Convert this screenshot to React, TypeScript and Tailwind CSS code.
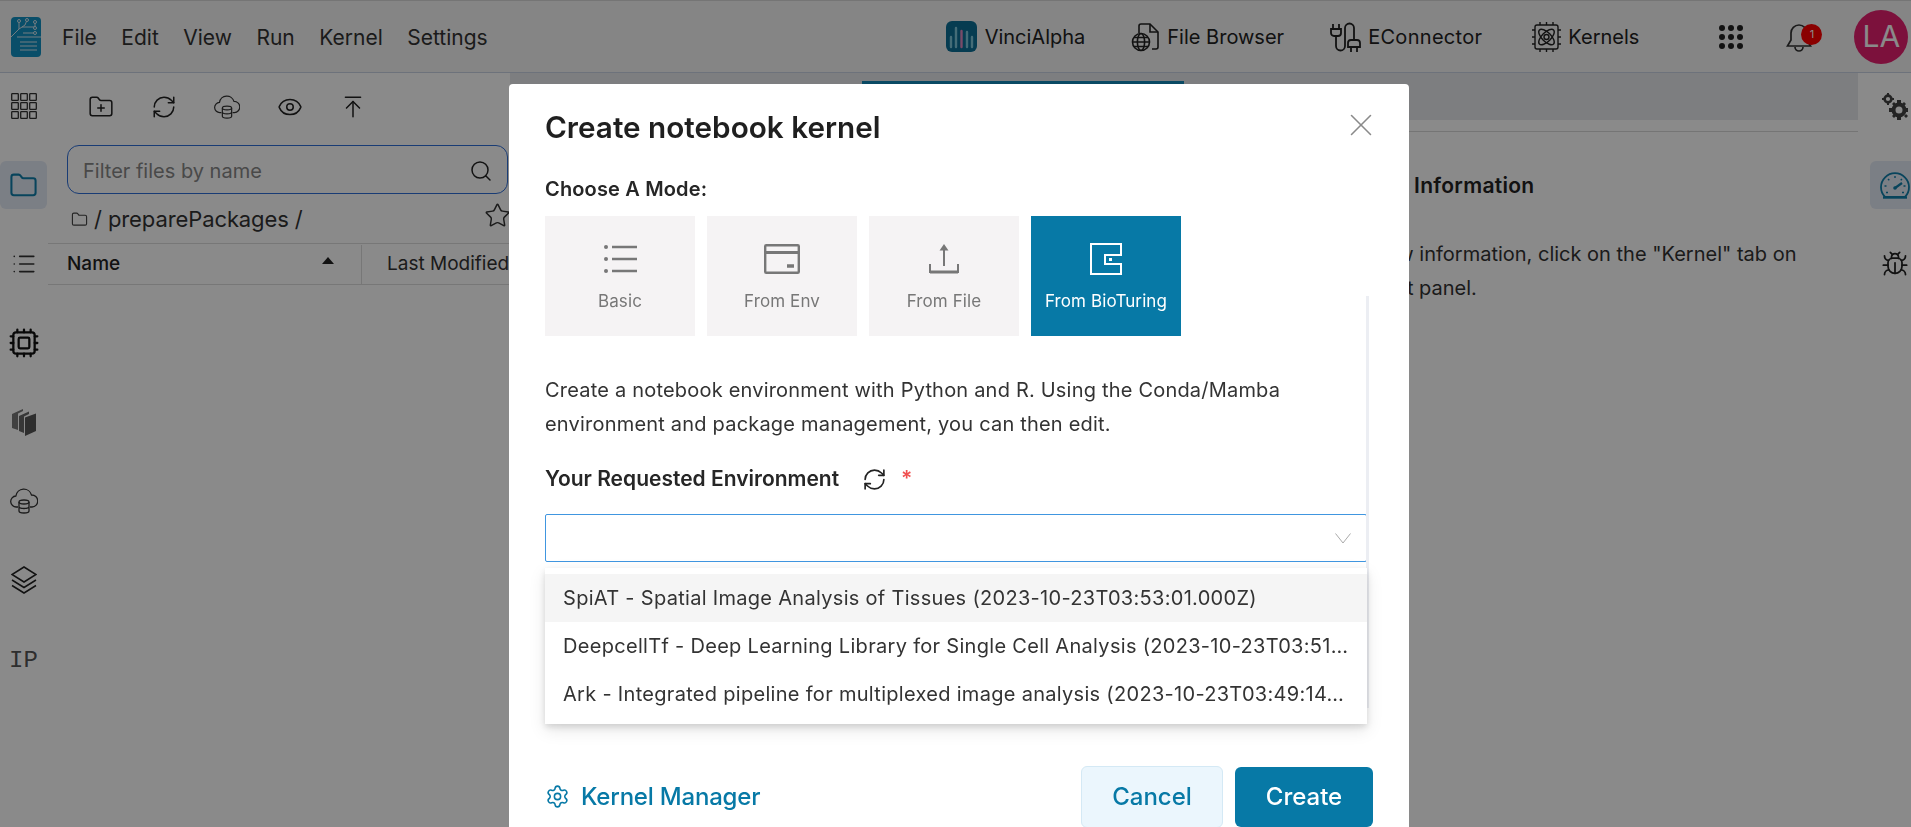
import React from 'react';
import {
  ArrowUpToLine,
  Bug,
  Cpu,
  Eye,
  Folder,
  FolderPlus,
  List,
  RefreshCw,
  Search,
  Settings,
  Star,
  X,
} from 'lucide-react';

const font = "font-['Inter','Liberation_Sans',sans-serif]";

function Logo() {
  return (
    <svg width="30" height="40" viewBox="0 0 30 40" className="shrink-0">
      <rect width="30" height="40" rx="4" fill="#1290c2" />
      <g fill="none" stroke="#d5e6ee" strokeWidth="1">
        <path d="M0 20 L8 12 V4 M8 12 L14 8 L16 3 M11 10 H24 V5 M12 16 H24 M6 20 H30" />
        <path d="M9 25 H26 M9 29 H26 M9 33 H26" />
      </g>
      <g fill="#1290c2" stroke="#d5e6ee" strokeWidth="1">
        <circle cx="8" cy="4" r="1.5" />
        <circle cx="16" cy="3" r="1.5" />
        <circle cx="24" cy="5" r="1.5" />
        <circle cx="24" cy="11" r="1.5" />
        <circle cx="24" cy="16" r="1.5" />
      </g>
    </svg>
  );
}

function VinciIcon() {
  return (
    <svg width="31" height="31" viewBox="0 0 31 31" className="mr-[2px] shrink-0">
      <rect width="31" height="31" rx="6" fill="#0c6f96" />
      <g strokeWidth="2.4" strokeLinecap="round">
        <path d="M5 26 V16" stroke="#7fc8dc" />
        <path d="M10 26 V7" stroke="#7fc8dc" />
        <path d="M15.5 26 V10" stroke="#e08ac0" />
        <path d="M21 26 V11" stroke="#7fc8dc" />
        <path d="M26 26 V16" stroke="#7fc8dc" />
      </g>
    </svg>
  );
}

function FileGlobeIcon() {
  return (
    <svg width="30" height="30" viewBox="0 0 30 30" fill="none" stroke="#222" strokeWidth="1.6" className="shrink-0">
      <path d="M8 11 V4 a2 2 0 0 1 2-2 H19 L27 10 V25 a2 2 0 0 1-2 2 H21" />
      <path d="M19 2 V10 H27" />
      <circle cx="10" cy="20" r="8.5" />
      <ellipse cx="10" cy="20" rx="3.6" ry="8.5" />
      <path d="M1.5 20 H18.5 M3 15.5 H17 M3 24.5 H17" />
    </svg>
  );
}

function PlugIcon() {
  return (
    <svg width="32" height="32" viewBox="0 0 32 32" fill="none" stroke="#222" strokeWidth="1.8" className="shrink-0">
      <path d="M3 3 V8 M9 3 V8 M1 8 H11 V12 a3 3 0 0 1-3 3 H4 a3 3 0 0 1-3-3 Z" />
      <path d="M6 15 V25 a4.5 4.5 0 0 0 9 0 V7 a4.5 4.5 0 0 1 9 0 V19" />
      <path d="M21 19 H27 a3 3 0 0 1 3 3 V26 H18 V22 a3 3 0 0 1 3-3 Z M21 26 V31 M27 26 V31" />
    </svg>
  );
}

function KernelChipIcon() {
  return (
    <svg width="31" height="32" viewBox="0 0 31 32" fill="none" stroke="#222" strokeWidth="1.4" className="ml-[3px] shrink-0">
      <rect x="4" y="4" width="23" height="24" rx="2" />
      <path d="M9 1 V4 M15.5 1 V4 M22 1 V4 M9 28 V31 M15.5 28 V31 M22 28 V31 M1 9 H4 M1 16 H4 M1 23 H4 M27 9 H30 M27 16 H30 M27 23 H30" />
      <ellipse cx="15.5" cy="16" rx="10" ry="4.5" transform="rotate(45 15.5 16)" />
      <ellipse cx="15.5" cy="16" rx="10" ry="4.5" transform="rotate(-45 15.5 16)" />
      <circle cx="15.5" cy="16" r="2.5" />
    </svg>
  );
}

function DotsIcon() {
  return (
    <div className="grid grid-cols-3 gap-x-[3px] gap-y-[3px]">
      {[0, 1, 2, 3, 4, 5, 6, 7, 8].map((i) => (
        <span key={i} className="size-[6px] rounded-full bg-[#222]" />
      ))}
    </div>
  );
}

function GridIcon() {
  return (
    <svg width="26" height="26" viewBox="0 0 26 26" fill="none" stroke="#333" strokeWidth="1.3">
      {[0, 9, 18].map((y) =>
        [0, 9, 18].map((x) => <rect key={`${x}-${y}`} x={x + 0.7} y={y + 0.7} width="6.6" height="6.6" rx="0.6" />),
      )}
    </svg>
  );
}

function CloudDbIcon({ size = 28 }: { size?: number }) {
  return (
    <svg width={size} height={size} viewBox="0 0 28 28" fill="none" stroke="#333" strokeWidth="1.3">
      <path d="M8 20 H6.5 a5.5 5.5 0 0 1-.6-11 a8 8 0 0 1 15.6-1 a6 6 0 0 1 .5 12 H20" />
      <ellipse cx="14" cy="15" rx="5" ry="2" />
      <path d="M9 15 V24 c0 1.1 2.2 2 5 2 s5-.9 5-2 V15 M9 19.5 c0 1.1 2.2 2 5 2 s5-.9 5-2" />
    </svg>
  );
}

function PacksIcon() {
  return (
    <svg width="26" height="28" viewBox="0 0 26 28" fill="#666">
      <path d="M1 6 L12 1 V3 L7 5.5 V22 L1 20 Z" fill="#777" />
      <path d="M8 8 L18 3.5 V6 L13 8.5 V25 L8 23 Z" fill="#666" />
      <path d="M14 9.5 L25 5.5 V23 L14 28 Z" fill="#555" />
    </svg>
  );
}

function StackIcon() {
  return (
    <svg width="26" height="28" viewBox="0 0 26 28" fill="none" stroke="#222" strokeWidth="1.5">
      <path d="M13 1 L25 8.5 L13 16 L1 8.5 Z" />
      <path d="M1 14 L13 21.5 L25 14" />
      <path d="M1 19.5 L13 27 L25 19.5" />
    </svg>
  );
}

function GearsIcon() {
  return (
    <svg width="26" height="27" viewBox="0 0 26 27" fill="#444">
      <circle cx="6" cy="6" r="3.4" fill="none" stroke="#444" strokeWidth="2.6" />
      <path d="M5 0 H7 V2 H5 Z M5 10 H7 V12 H5 Z M0 5 H2 V7 H0 Z M10 5 H12 V7 H10 Z" />
      <circle cx="17" cy="17" r="5.5" fill="none" stroke="#444" strokeWidth="4" />
      <path d="M15 7 H19 V10 H15 Z M15 24 H19 V27 H15 Z M7 15 H10 V19 H7 Z M24 15 H26 V19 H24 Z M10 11 L12 9 L14 11 L12 13 Z M22 23 L24 21 L26 23 L24 25 Z M20 11 L22 9 L24 11 L22 13 Z M10 23 L12 21 L14 23 L12 25 Z" />
    </svg>
  );
}

function DialIcon() {
  return (
    <svg width="30" height="27" viewBox="0 0 30 27" fill="none" stroke="#0f7faa" strokeWidth="1.8" className="ml-[3px]">
      <path d="M5 25 a14 14 0 1 1 20 0 Z" />
      <path d="M3 25.5 H27" strokeWidth="2.4" />
      <path d="M15 16 L22 11" strokeWidth="2.2" />
      <circle cx="15" cy="16" r="1.8" fill="#0f7faa" stroke="none" />
      <path d="M15 4 V6 M8 7 L9.3 8.3 M22 7 L20.7 8.3 M4.5 14 H6.5 M23.5 14 H25.5 M6 20.5 H8 M22 20.5 H24" strokeWidth="1.4" />
    </svg>
  );
}

function BulletsIcon() {
  return (
    <svg width="33" height="28" viewBox="0 0 33 28" fill="none" stroke="#777" strokeWidth="2.4">
      <path d="M8 2 H33 M8 14 H33 M8 26 H33" />
      <circle cx="2" cy="2" r="2" fill="#777" stroke="none" />
      <circle cx="2" cy="14" r="2" fill="#777" stroke="none" />
      <circle cx="2" cy="26" r="2" fill="#777" stroke="none" />
    </svg>
  );
}

function CardIcon() {
  return (
    <svg width="36" height="30" viewBox="0 0 36 30" fill="none" stroke="#777" strokeWidth="2.4">
      <rect x="1.2" y="1.2" width="33.6" height="27.6" rx="1" />
      <path d="M1 8.5 H35" strokeWidth="3" />
      <path d="M23 22 H30" strokeWidth="3.5" />
    </svg>
  );
}

function TrayUpIcon() {
  return (
    <svg width="30" height="30" viewBox="0 0 30 30" fill="none" stroke="#777" strokeWidth="2">
      <path d="M1 20 V28 H29 V20" />
      <path d="M1 28 H29" strokeWidth="3" />
      <path d="M15 22 V4" />
      <path d="M15 0 L19.5 6.5 H10.5 Z" fill="#777" stroke="none" />
    </svg>
  );
}

function WalletIcon() {
  return (
    <svg width="32" height="32" viewBox="0 0 32 32" fill="none" stroke="#fff" strokeWidth="2">
      <path d="M31 1 H1 V31 H31 V21 H15 V12 H31 Z" />
      <rect x="19" y="15" width="3" height="3" fill="#fff" stroke="none" />
    </svg>
  );
}

function MenuItem({ label }: { label: string }) {
  return <span className="text-[21px] text-[#333]">{label}</span>;
}

function TopLink({ icon, label, wide }: { icon: React.ReactNode; label: string; wide?: boolean }) {
  return (
    <div className="flex items-center gap-[6px]">
      {icon}
      <span className={`text-[20px] text-[#222] ${wide ? 'tracking-[0.3px]' : ''}`}>{label}</span>
    </div>
  );
}

function Header() {
  return (
    <header className="flex h-[73px] shrink-0 items-center border-t border-b border-t-[#d8d8d8] border-b-[#c9d2e4] bg-[#f6f6f6] pl-[11px]">
      <Logo />
      <nav className="ml-[21px] flex items-center gap-[24.5px] pt-[2px]">
        {['File', 'Edit', 'View', 'Run', 'Kernel', 'Settings'].map((m) => (
          <MenuItem key={m} label={m} />
        ))}
      </nav>
      <div className="ml-[458px] flex items-center gap-[46px]">
        <TopLink icon={<VinciIcon />} label="VinciAlpha" />
        <TopLink icon={<FileGlobeIcon />} label="File Browser" />
        <TopLink icon={<PlugIcon />} label="EConnector" wide />
        <TopLink icon={<KernelChipIcon />} label="Kernels" />
      </div>
      <div className="ml-[80px]">
        <DotsIcon />
      </div>
      <div className="relative ml-[43px] w-[36px] pt-[2px]">
        <svg width="26" height="32" viewBox="0 0 26 32" fill="none" stroke="#333" strokeWidth="1.7">
          <path d="M13 3 a8 8 0 0 0-8 8 V18 L1.5 24 H24.5 L21 18 V11 a8 8 0 0 0-8-8 Z M9 25 a4 4 0 0 0 8 0" />
        </svg>
        <span className="absolute top-[4px] left-[15px] flex size-[21px] items-center justify-center rounded-full bg-[#ff0000] text-[11px] text-[#fff]">
          1
        </span>
      </div>
      <div className="ml-[32px] flex size-[54px] items-center justify-center rounded-full bg-[#e6206f] text-[30px] text-[#fff]">
        LA
      </div>
    </header>
  );
}

function RailItem({ children, active }: { children: React.ReactNode; active?: boolean }) {
  return (
    <div className={`flex h-[48px] w-[47px] items-center justify-center rounded-[6px] ${active ? 'bg-[#e4eaf6]' : ''}`}>
      {children}
    </div>
  );
}

function LeftRail() {
  return (
    <aside className="flex w-[48px] shrink-0 flex-col gap-[31px] pt-[9px]">
      <RailItem>
        <GridIcon />
      </RailItem>
      <RailItem active>
        <Folder size={29} strokeWidth={1.7} className="text-[#0f7faa]" />
      </RailItem>
      <RailItem>
        <List size={26} strokeWidth={1.5} className="text-[#333]" />
      </RailItem>
      <RailItem>
        <Cpu size={32} strokeWidth={1.7} className="text-[#111]" />
      </RailItem>
      <RailItem>
        <PacksIcon />
      </RailItem>
      <RailItem>
        <CloudDbIcon />
      </RailItem>
      <RailItem>
        <StackIcon />
      </RailItem>
      <RailItem>
        <span className="pt-[3px] font-['Liberation_Mono',monospace] text-[24px] text-[#555]">IP</span>
      </RailItem>
    </aside>
  );
}

function FilePanel() {
  return (
    <section className="w-[462px] shrink-0 pl-[19px]">
      <div className="flex h-[66px] items-center gap-[37px] pl-[21px] pt-[2px]">
        <FolderPlus size={26} strokeWidth={1.4} className="text-[#222]" />
        <RefreshCw size={26} strokeWidth={1.4} className="text-[#222]" />
        <CloudDbIcon size={26} />
        <Eye size={26} strokeWidth={1.4} className="text-[#222]" />
        <ArrowUpToLine size={26} strokeWidth={1.4} className="text-[#222]" />
      </div>
      <div className="mt-[6px] flex h-[49px] w-[441px] items-center justify-between rounded-[12px] border border-[#2f6fd8] pr-[14px] pl-[15px] pt-[2px]">
        <span className="text-[20px] text-[#888]">Filter files by name</span>
        <Search size={24} strokeWidth={1.5} className="text-[#222]" />
      </div>
      <div className="relative flex h-[49px] items-center gap-[6px] pl-[4px] pt-[2px] text-[22px] tracking-[-0.1px] text-[#333]">
        <Folder size={17} strokeWidth={1.6} className="text-[#444]" />
        <span>/ preparePackages /</span>
        <Star size={27} strokeWidth={1.3} className="absolute top-[8px] left-[417px] text-[#333]" />
      </div>
      <div className="-ml-[19px] flex h-[42px] w-[480px] items-center border-t border-b border-[#ddd] pt-[1px] text-[19px]">
        <span className="w-[290px] pl-[19px] font-medium text-[#222]">Name</span>
        <span className="-ml-[16px] mt-[-8px] size-0 shrink-0 border-x-[6px] border-b-[7px] border-x-transparent border-b-[#222]" />
        <span className="ml-[27px] h-full w-[1px] bg-[#ddd]" />
        <span className="ml-[25px] whitespace-nowrap text-[#333]">Last Modified</span>
      </div>
    </section>
  );
}

function MainPanel() {
  return (
    <section className="flex min-w-0 flex-1 flex-col">
      <div className="flex h-[47px] items-start bg-[#e8e9ec] pt-[8px]">
        <div className="ml-[352px] h-[3px] w-[322px] bg-[#1389ba]" />
      </div>
      <div className="h-[12px] border-b border-[#d8d8d8]" />
      <div className="ml-auto w-[700px] pl-[183px] pt-[38px]">
        <h3 className="whitespace-nowrap text-[21px] font-semibold tracking-[0.3px] text-[#222]">Kernel Information</h3>
        <p className="mt-[35px] whitespace-nowrap text-[20px] leading-[34px] text-[#333]">
          To view information, click on the "Kernel" tab on
          <br />
          <span className="ml-[7px]">the left panel.</span>
        </p>
      </div>
    </section>
  );
}

function RightRail() {
  return (
    <aside className="ml-[12px] flex w-[41px] shrink-0 flex-col gap-[31px] pt-[9px]">
      <RailItem>
        <div className="ml-[3px]">
          <GearsIcon />
        </div>
      </RailItem>
      <RailItem active>
        <DialIcon />
      </RailItem>
      <RailItem>
        <Bug size={28} strokeWidth={1.5} className="ml-[3px] text-[#222]" />
      </RailItem>
    </aside>
  );
}

function ModeTile({ icon, label, active }: { icon: React.ReactNode; label: string; active?: boolean }) {
  return (
    <div
      className={`flex h-[120px] w-[150px] flex-col items-center ${active ? 'bg-[#0779a6] text-[#fff]' : 'bg-[#f5f3f4] text-[#777]'}`}
    >
      <div className="flex h-[73px] items-center justify-center pt-[13px]">{icon}</div>
      <span className="whitespace-nowrap text-[17px] tracking-[0.1px]">{label}</span>
    </div>
  );
}

const options = [
  'SpiAT - Spatial Image Analysis of Tissues (2023-10-23T03:53:01.000Z)',
  'DeepcellTf - Deep Learning Library for Single Cell Analysis (2023-10-23T03:51:14.000Z)',
  'Ark - Integrated pipeline for multiplexed image analysis (2023-10-23T03:49:14.000Z)',
];

function KernelModal() {
  return (
    <div className="fixed inset-0 bg-black/[0.46] pt-[84px] pl-[509px]">
      <div className="relative h-[743px] w-[900px] overflow-hidden rounded-t-[4px] bg-white pr-[43px] pl-[36px]">
        <div className="flex h-[86px] items-center justify-between">
          <h2 className="text-[29.7px] font-semibold text-[#1f1f1f]">Create notebook kernel</h2>
          <X size={38} strokeWidth={1} className="mt-[-4px] mr-[-14px] text-[#8a8a8a]" />
        </div>
        <p className="mt-[5px] text-[20px] leading-[28px] font-semibold tracking-[0.15px] text-[#262626]">Choose A Mode:</p>
        <div className="mt-[13px] flex gap-[12px]">
          <ModeTile icon={<BulletsIcon />} label="Basic" />
          <ModeTile icon={<CardIcon />} label="From Env" />
          <ModeTile icon={<TrayUpIcon />} label="From File" />
          <ModeTile icon={<WalletIcon />} label="From BioTuring" active />
        </div>
        <p className="mt-[37px] text-[20px] leading-[34px] tracking-[0.2px] text-[#333]">
          Create a notebook environment with Python and R. Using the Conda/Mamba
          <br />
          environment and package management, you can then edit.
        </p>
        <div className="mt-[24px] flex h-[28px] items-center text-[21px] font-semibold text-[#262626]">
          Your Requested Environment
          <RefreshCw size={25} strokeWidth={1.6} className="ml-[23px] text-[#222]" />
          <span className="ml-[14px] text-[#f05050]">*</span>
        </div>
        <div className="relative mt-[21px] w-[822px]">
          <div className="flex h-[48px] items-center justify-end rounded-[2px] border border-[#4096e0] pr-[15px]">
            <svg width="16" height="11" viewBox="0 0 16 11" fill="none" stroke="#aaa" strokeWidth="1">
              <path d="M0.5 0.5 L8 10 L15.5 0.5" />
            </svg>
          </div>
          <div className="absolute top-[54px] right-0 left-0 z-10 bg-white pt-[6px] pb-[6px] shadow-[0_6px_16px_rgba(0,0,0,0.1),0_3px_6px_rgba(0,0,0,0.12)]">
            {options.map((o, i) => (
              <div
                key={o}
                className={`flex h-[48px] items-center px-[18px] text-[20px] tracking-[0.3px] text-[#333] ${i === 0 ? 'bg-[#f5f5f5]' : ''}`}
              >
                <span className="truncate">{o}</span>
              </div>
            ))}
          </div>
        </div>
        <div className="absolute top-[212px] left-[857px] h-[412px] w-[3px] bg-[#eceef3]" />
        <div className="absolute right-[36px] bottom-0 left-[36px] flex h-[61px] items-center justify-between">
          <div className="flex items-center gap-[11px] text-[#0779a6]">
            <Settings size={25} strokeWidth={1.5} />
            <span className="text-[24px] font-medium tracking-[-0.2px]">Kernel Manager</span>
          </div>
          <div className="flex items-center gap-[12px]">
            <div className="flex h-[62px] w-[142px] items-center justify-center rounded-[6px] border border-[#d4e9f5] bg-[#ebf6fd] text-[24px] font-medium text-[#0779a6]">
              Cancel
            </div>
            <div className="flex h-[60px] w-[138px] items-center justify-center rounded-[6px] bg-[#0779a6] text-[24px] font-medium text-[#fff]">
              Create
            </div>
          </div>
        </div>
      </div>
    </div>
  );
}

export default function App() {
  return (
    <div className={`flex h-screen flex-col overflow-hidden bg-[#fff] ${font}`}>
      <Header />
      <div className="flex min-h-0 flex-1">
        <LeftRail />
        <FilePanel />
        <MainPanel />
        <RightRail />
      </div>
      <KernelModal />
    </div>
  );
}
